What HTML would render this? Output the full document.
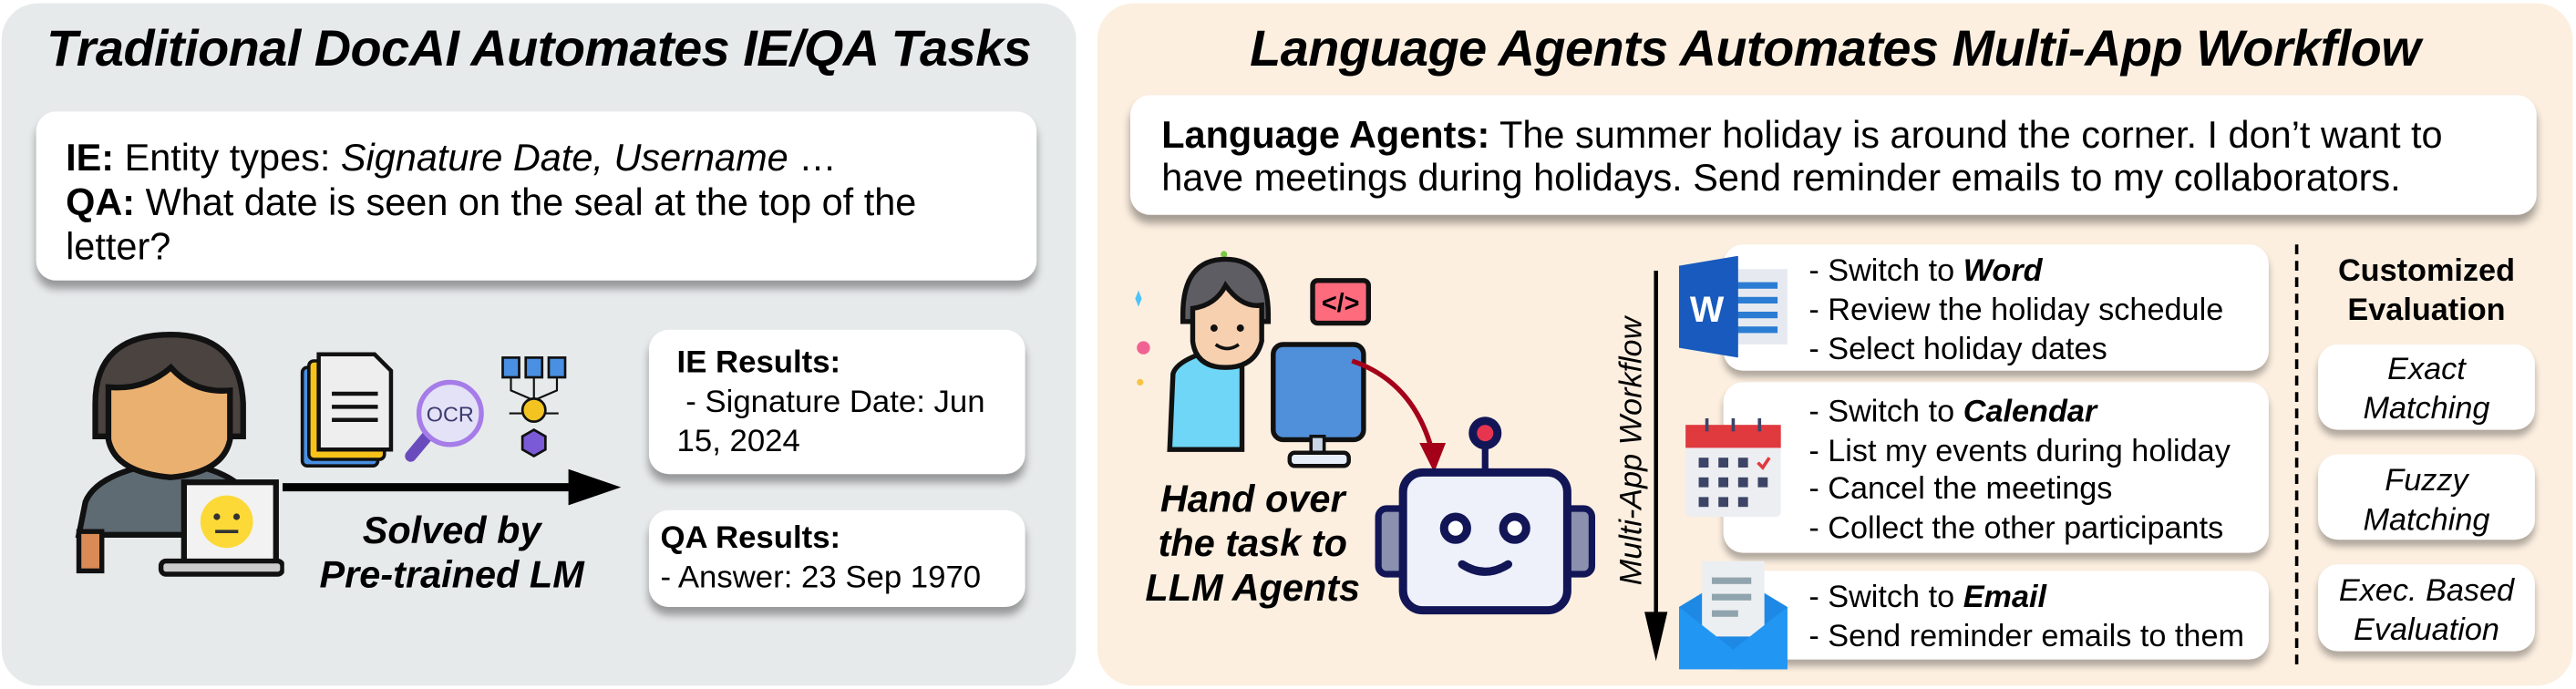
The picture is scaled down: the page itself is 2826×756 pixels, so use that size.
<!DOCTYPE html>
<html><head><meta charset="utf-8"><style>
html,body{margin:0;padding:0;background:#fff;}
body{width:2826px;height:756px;overflow:hidden;font-family:"Liberation Sans",Arial,sans-serif;}
#w{position:absolute;left:0;top:0;width:1568px;height:420px;transform:scale(1.80229,1.8);transform-origin:0 0;}
.a{position:absolute;}
.p{position:absolute;border-radius:22px;}
.box{position:absolute;background:#fff;border-radius:12px;box-shadow:0 5px 5px rgba(0,0,0,0.35);}
.t{position:absolute;white-space:nowrap;color:#000;}
.bi{font-weight:bold;font-style:italic;}
</style></head><body><div id="w">
<div class="p" style="left:1px;top:2px;width:654px;height:416px;background:#e7eaeb"></div>
<div class="p" style="left:668px;top:2px;width:898px;height:416px;background:#fcefe0"></div>

<div class="t bi" style="left:0;width:656px;text-align:center;top:12px;font-size:31px;letter-spacing:-0.3px">Traditional DocAI Automates IE/QA Tasks</div>
<div class="box" style="left:22px;top:68px;width:609px;height:103px"></div>
<div class="t" style="left:40px;top:83px;font-size:23px;line-height:27px;">
<b>IE:</b> Entity types: <i>Signature Date, Username</i> …<br><b>QA:</b> What date is seen on the seal at the top of the<br>letter?</div>

<!-- left person -->
<svg class="a" style="left:28px;top:196px" width="145" height="160" viewBox="0 0 145 160">
<path d="M20 130 L24 110 Q30 95 60 88 L92 88 Q120 95 124 110 L128 130 Z" fill="#5f6b73" stroke="#111" stroke-width="3.5"/>
<rect x="66" y="75" width="20" height="18" fill="#e5a36a" stroke="#111" stroke-width="3"/>
<path d="M30 50 Q30 8 76 8 Q118 8 120 50 L120 70 L30 70 Z" fill="#4a4340" stroke="#111" stroke-width="3.5"/>
<path d="M38 40 Q60 42 76 28 Q90 44 112 42 L112 72 Q108 92 76 95 Q42 92 38 72 Z" fill="#eab070" stroke="#111" stroke-width="3.5"/>
<rect x="84" y="98" width="56" height="50" fill="#f2f2f2" stroke="#111" stroke-width="3.5"/>
<rect x="70" y="146" width="74" height="8" rx="3" fill="#ccc" stroke="#111" stroke-width="3"/>
<circle cx="110" cy="122" r="16" fill="#fcd937"/>
<circle cx="104" cy="119" r="2" fill="#333"/><circle cx="116" cy="119" r="2" fill="#333"/>
<line x1="103" y1="128" x2="117" y2="128" stroke="#333" stroke-width="2"/>
<rect x="20" y="128" width="14" height="24" fill="#d98a55" stroke="#111" stroke-width="3"/>
</svg>
<!-- docs -->
<svg class="a" style="left:182px;top:214px" width="165" height="74" viewBox="0 0 165 74">
<rect x="2" y="10" width="46" height="60" rx="3" fill="#4a90e2" stroke="#111" stroke-width="2"/>
<rect x="6" y="6" width="46" height="60" rx="3" fill="#f7c21a" stroke="#111" stroke-width="2"/>
<path d="M12 2 L46 2 L56 12 L56 60 L12 60 Z" fill="#eee" stroke="#111" stroke-width="2.5"/>
<line x1="20" y1="26" x2="48" y2="26" stroke="#111" stroke-width="2.5"/><line x1="20" y1="34" x2="48" y2="34" stroke="#111" stroke-width="2.5"/><line x1="20" y1="42" x2="48" y2="42" stroke="#111" stroke-width="2.5"/>
<line x1="78" y1="52" x2="68" y2="64" stroke="#6a4bbd" stroke-width="7" stroke-linecap="round"/>
<circle cx="92" cy="38" r="19" fill="#e4e2f6" stroke="#a57ce8" stroke-width="3"/>
<text x="92" y="43" text-anchor="middle" font-size="13" font-family="Liberation Sans" fill="#3a3a70">OCR</text>
<rect x="124" y="4" width="10" height="12" fill="#4a90e2" stroke="#111" stroke-width="1.5"/><rect x="138" y="4" width="10" height="12" fill="#4a90e2" stroke="#111" stroke-width="1.5"/><rect x="152" y="4" width="10" height="12" fill="#4a90e2" stroke="#111" stroke-width="1.5"/>
<path d="M129 16 v8 l14 6 M143 16 v14 M157 16 v8 l-14 6 M128 38 h8 M150 38 h8" stroke="#111" stroke-width="1.2" fill="none"/>
<circle cx="143" cy="36" r="7" fill="#f3c322" stroke="#111" stroke-width="1.5"/>
<path d="M136 52 l7 -4 l7 4 l0 8 l-7 4 l-7 -4 Z" fill="#7b5ad8" stroke="#111" stroke-width="1.5"/>
</svg>
<svg class="a" style="left:170px;top:286px" width="210" height="22"><line x1="2" y1="11" x2="180" y2="11" stroke="#000" stroke-width="5"/><polygon points="176,0 208,11 176,22" fill="#000"/></svg>
<div class="t bi" style="left:175px;width:200px;text-align:center;top:310px;font-size:23px;line-height:27px">Solved by<br>Pre-trained LM</div>

<div class="box" style="left:395px;top:201px;width:229px;height:88px"></div>
<div class="t" style="left:412px;top:210px;font-size:19.3px;line-height:24px"><b>IE Results:</b><br>&nbsp;- Signature Date: Jun<br>15, 2024</div>
<div class="box" style="left:395px;top:311px;width:229px;height:59px"></div>
<div class="t" style="left:402px;top:317px;font-size:19.3px;line-height:24px"><b>QA Results:</b><br>- Answer: 23 Sep 1970</div>

<!-- right -->
<div class="t bi" style="left:668px;width:898px;text-align:center;top:12px;font-size:31px;letter-spacing:-0.3px">Language Agents Automates Multi-App Workflow</div>
<div class="box" style="left:688px;top:58px;width:856px;height:73px"></div>
<div class="t" style="left:707px;top:69px;font-size:23px;line-height:26px"><b>Language Agents:</b> The summer holiday is around the corner. I don’t want to<br>have meetings during holidays. Send reminder emails to my collaborators.</div>

<svg class="a" style="left:686px;top:148px" width="200" height="140" viewBox="0 0 200 140">
<circle cx="59" cy="7" r="2" fill="#7ac943"/>
<path d="M5 34 l2 -5 l2 5 l-2 5z" fill="#4fc3f7"/><path d="M54 34 l3 -6 l3 6 l-3 6z" fill="#f6c344"/>
<circle cx="10" cy="64" r="4" fill="#f06292"/><circle cx="8" cy="85" r="2" fill="#f6c344"/>
<path d="M26 126 L28 80 Q30 72 50 66 L70 66 L70 126 Z" fill="#6fd6f7" stroke="#111" stroke-width="3"/>
<path d="M34 44 Q34 10 60 10 Q86 10 86 44 L86 48 L34 48 Z" fill="#5d5d63" stroke="#111" stroke-width="3"/>
<path d="M40 40 Q54 38 60 26 Q70 40 82 38 L82 60 Q78 76 60 76 Q42 76 40 60 Z" fill="#f7d0b0" stroke="#111" stroke-width="3"/>
<circle cx="53" cy="52" r="2.2" fill="#111"/><circle cx="69" cy="52" r="2.2" fill="#111"/>
<path d="M54 62 Q61 67 68 62" fill="none" stroke="#111" stroke-width="2"/>
<rect x="113" y="23" width="34" height="26" rx="3" fill="#fd6b7d" stroke="#111" stroke-width="3"/>
<text x="130" y="42" text-anchor="middle" font-size="16" font-weight="bold" font-family="Liberation Sans">&lt;/&gt;</text>
<rect x="89" y="62" width="55" height="58" rx="6" fill="#508fd9" stroke="#111" stroke-width="3"/>
<rect x="112" y="118" width="8" height="12" fill="#c9d6e6" stroke="#111" stroke-width="2"/>
<rect x="99" y="128" width="36" height="8" rx="3" fill="#e6eefa" stroke="#111" stroke-width="2.5"/>
<path d="M137 72 Q175 85 186 128" fill="none" stroke="#a4001a" stroke-width="3"/>
<polygon points="178,122 194,122 187,140" fill="#a4001a"/>
</svg>
<div class="t bi" style="left:690px;width:145px;text-align:center;top:291px;font-size:23px;line-height:27px">Hand over<br>the task to<br>LLM Agents</div>
<svg class="a" style="left:836px;top:250px" width="136" height="125" viewBox="0 0 136 125">
<line x1="68" y1="18" x2="68" y2="38" stroke="#121656" stroke-width="4"/>
<circle cx="68" cy="14" r="10" fill="#121656"/><circle cx="68" cy="14" r="5" fill="#e8354f"/>
<rect x="3" y="60" width="18" height="40" rx="5" fill="#8a90ad" stroke="#121656" stroke-width="4"/>
<rect x="115" y="60" width="18" height="40" rx="5" fill="#8a90ad" stroke="#121656" stroke-width="4"/>
<rect x="18" y="38" width="100" height="84" rx="12" fill="#eef1fa" stroke="#121656" stroke-width="5"/>
<circle cx="50" cy="72" r="7" fill="#fff" stroke="#121656" stroke-width="5"/><circle cx="86" cy="72" r="7" fill="#fff" stroke="#121656" stroke-width="5"/>
<path d="M54 94 Q68 103 82 94" fill="none" stroke="#121656" stroke-width="5" stroke-linecap="round"/>
</svg>

<div class="t" style="left:994px;top:275px;transform:translate(-50%,-50%) rotate(-90deg);font-style:italic;font-size:19px">Multi-App Workflow</div>
<svg class="a" style="left:998px;top:165px" width="20" height="240"><line x1="10" y1="0" x2="10" y2="215" stroke="#000" stroke-width="2.5"/><polygon points="3,208 17,208 10,238" fill="#000"/></svg>

<div class="box" style="left:1049px;top:149px;width:332px;height:77px;box-shadow:0 4px 4px rgba(0,0,0,0.3)"></div>
<div class="box" style="left:1049px;top:233px;width:332px;height:104px;box-shadow:0 4px 4px rgba(0,0,0,0.3)"></div>
<div class="box" style="left:1049px;top:348px;width:332px;height:54px;box-shadow:0 4px 4px rgba(0,0,0,0.3)"></div>
<svg class="a" style="left:1022px;top:156px" width="68" height="62" viewBox="0 0 68 62">
<rect x="26" y="8" width="40" height="46" fill="#e6eaf0"/>
<rect x="32" y="16" width="28" height="4" fill="#2b7cd3"/><rect x="32" y="25" width="28" height="4" fill="#2b7cd3"/><rect x="32" y="34" width="28" height="4" fill="#2b7cd3"/><rect x="32" y="43" width="28" height="4" fill="#2b7cd3"/>
<path d="M0 6 L36 0 L36 62 L0 56 Z" fill="#185abd"/>
<text x="17" y="40" text-anchor="middle" font-size="22" font-weight="bold" fill="#fff" font-family="Liberation Sans">W</text>
</svg>
<svg class="a" style="left:1025px;top:253px" width="62" height="64" viewBox="0 0 62 64">
<rect x="1" y="6" width="58" height="56" rx="3" fill="#eceef2"/>
<rect x="1" y="6" width="58" height="14" fill="#e0393e"/>
<g fill="#3d4566"><rect x="9" y="26" width="6" height="6"/><rect x="21" y="26" width="6" height="6"/><rect x="33" y="26" width="6" height="6"/><rect x="9" y="38" width="6" height="6"/><rect x="21" y="38" width="6" height="6"/><rect x="33" y="38" width="6" height="6"/><rect x="45" y="38" width="6" height="6"/><rect x="9" y="50" width="6" height="6"/><rect x="21" y="50" width="6" height="6"/><rect x="33" y="50" width="6" height="6"/></g>
<path d="M45 29 l3 3 l4 -6" stroke="#e0393e" stroke-width="2" fill="none"/>
<g stroke="#3d4566" stroke-width="2" fill="none"><path d="M14 2 v8"/><path d="M30 2 v8"/><path d="M46 2 v8"/></g>
</svg>
<svg class="a" style="left:1022px;top:342px" width="66" height="66" viewBox="0 0 66 66">
<path d="M0 28 L33 8 L66 28 L66 66 L0 66 Z" fill="#1e88e5"/>
<rect x="14" y="0" width="38" height="46" fill="#eceff1"/>
<rect x="20" y="10" width="24" height="4" fill="#90a4ae"/><rect x="20" y="20" width="24" height="4" fill="#90a4ae"/><rect x="20" y="30" width="16" height="4" fill="#90a4ae"/>
<path d="M0 28 L33 54 L66 28 L66 66 L0 66 Z" fill="#2196f3"/>
</svg>
<div class="t" style="left:1101px;top:154px;font-size:19px;line-height:24px">- Switch to <b><i>Word</i></b><br>- Review the holiday schedule<br>- Select holiday dates</div>
<div class="t" style="left:1101px;top:240px;font-size:19px;line-height:23.7px">- Switch to <b><i>Calendar</i></b><br>- List my events during holiday<br>- Cancel the meetings<br>- Collect the other participants</div>
<div class="t" style="left:1101px;top:353px;font-size:19px;line-height:24px">- Switch to <b><i>Email</i></b><br>- Send reminder emails to them</div>

<div class="a" style="left:1397px;top:149px;height:256px;border-left:2px dashed #000"></div>
<div class="t" style="left:1411px;width:132px;text-align:center;top:154px;font-size:19px;line-height:24px;font-weight:bold">Customized<br>Evaluation</div>
<div class="box" style="left:1411px;top:210px;width:132px;height:52px;box-shadow:0 4px 4px rgba(0,0,0,0.3)"></div>
<div class="box" style="left:1411px;top:277px;width:132px;height:52px;box-shadow:0 4px 4px rgba(0,0,0,0.3)"></div>
<div class="box" style="left:1411px;top:344px;width:132px;height:53px;box-shadow:0 4px 4px rgba(0,0,0,0.3)"></div>
<div class="t" style="left:1411px;width:132px;text-align:center;top:214px;font-size:19px;line-height:24px;font-style:italic">Exact<br>Matching</div>
<div class="t" style="left:1411px;width:132px;text-align:center;top:282px;font-size:19px;line-height:24px;font-style:italic">Fuzzy<br>Matching</div>
<div class="t" style="left:1411px;width:132px;text-align:center;top:349px;font-size:19px;line-height:24px;font-style:italic">Exec. Based<br>Evaluation</div>
</div></body></html>
